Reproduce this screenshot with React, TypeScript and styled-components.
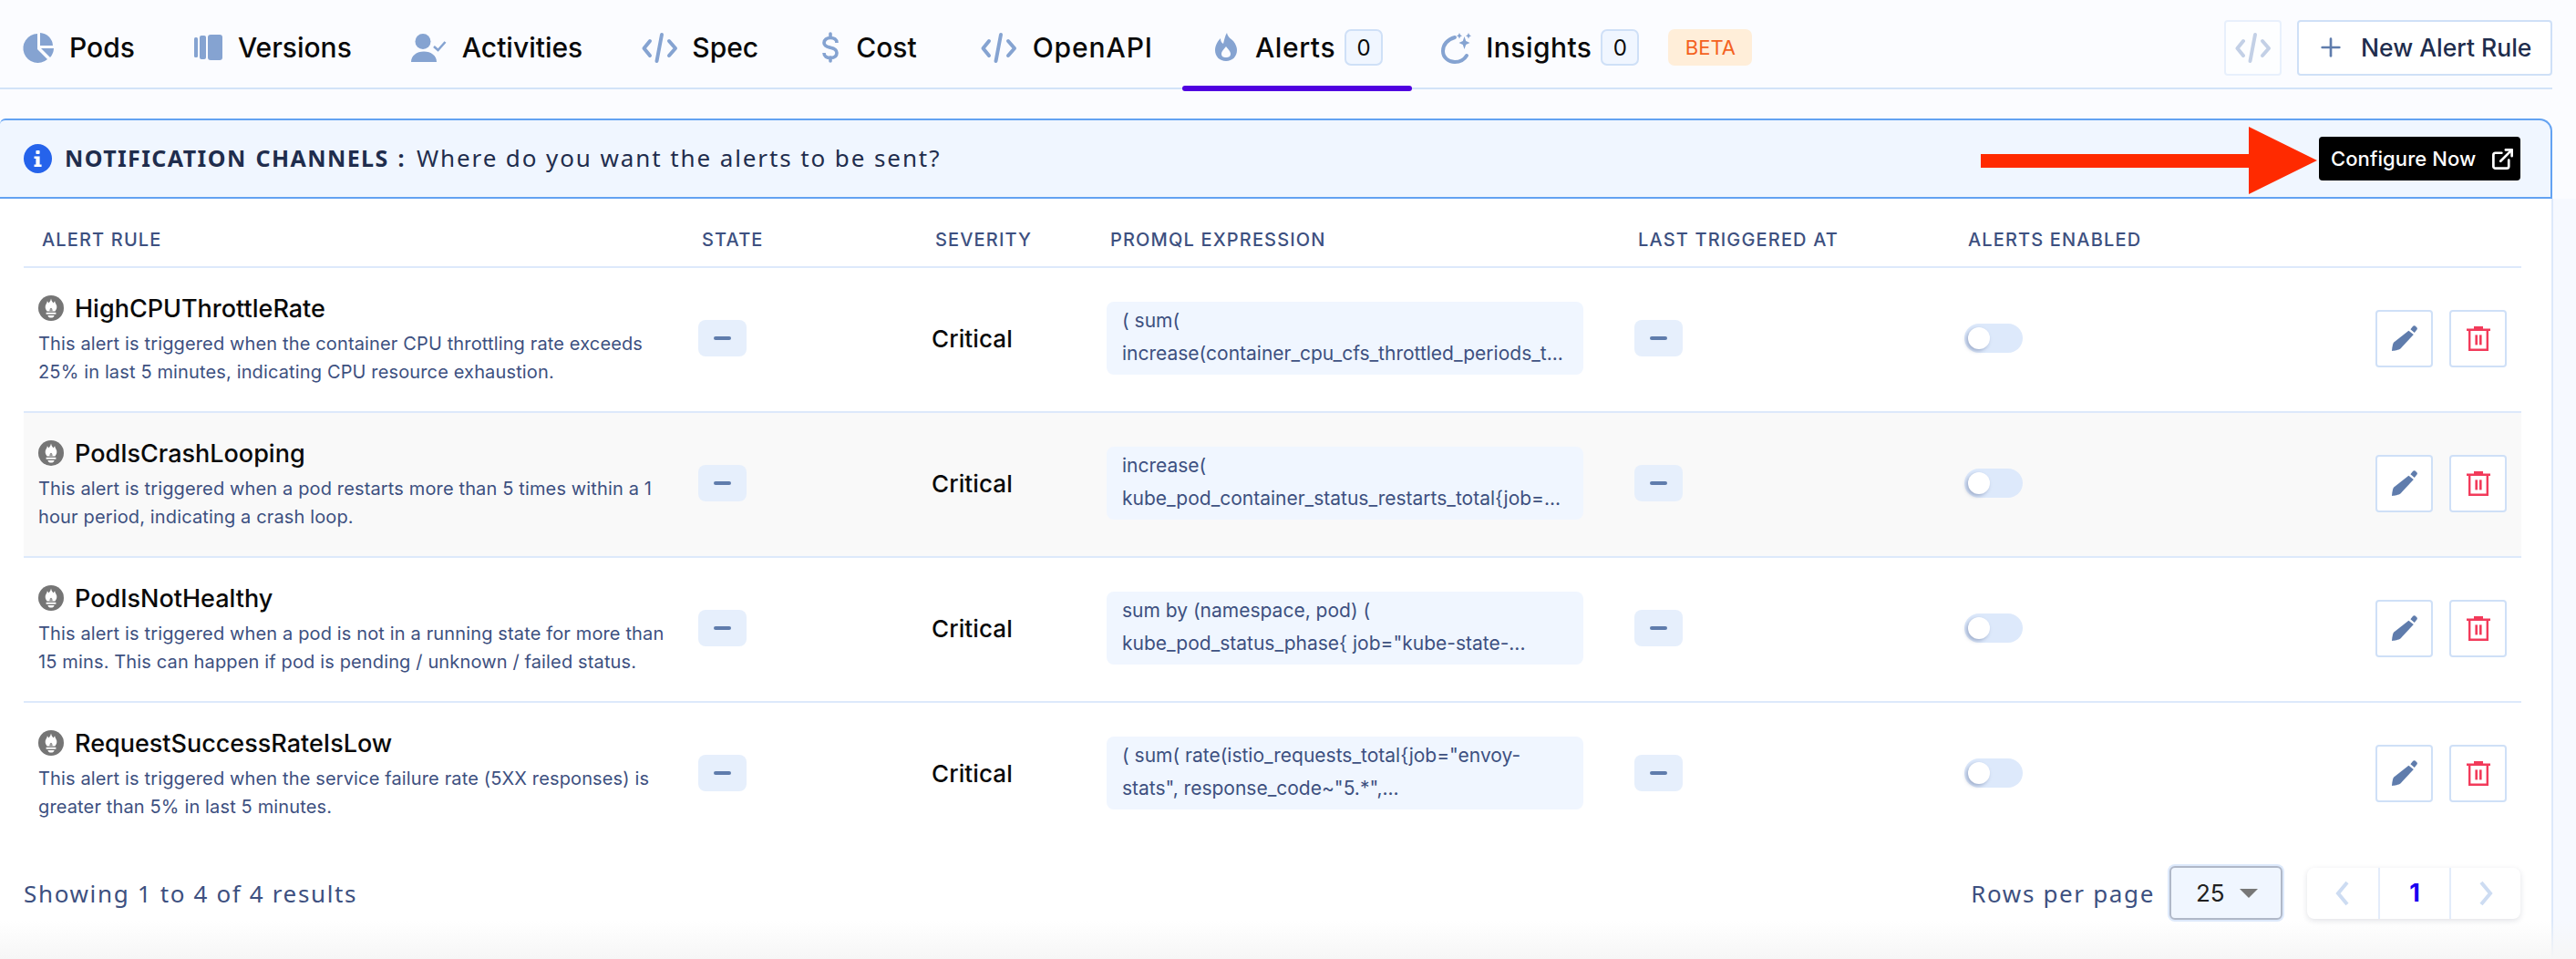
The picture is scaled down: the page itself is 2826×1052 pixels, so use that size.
import React from "react";
import styled, { createGlobalStyle } from "styled-components";
import { ExternalLink, Plus } from "lucide-react";

const GlobalStyle = createGlobalStyle`
  html, body {
    margin: 0;
    padding: 0;
    width: 2826px;
    height: 1052px;
    overflow: hidden;
    background: #fbfcff;
    font-family: Inter, "Liberation Sans", sans-serif;
  }
`;

const Page = styled.div`
  width: 2826px;
  height: 1052px;
  display: flex;
  flex-direction: column;
  position: relative;
  overflow: hidden;
`;

const TabBar = styled.div`
  box-sizing: border-box;
  width: 2800px;
  height: 98px;
  padding-top: 8px;
  border-bottom: 2px solid #d2e3f8;
  display: flex;
  align-items: stretch;
  justify-content: space-between;
  margin-bottom: 32px;
`;

const TabList = styled.nav`
  display: flex;
  align-items: stretch;
  margin-left: -6px;
`;

const Tab = styled.div<{ $active?: boolean; $track?: number }>`
  position: relative;
  display: flex;
  align-items: center;
  padding: 0 32px;
  font-size: 30px;
  font-weight: 500;
  letter-spacing: ${(p) => p.$track ?? 0}px;
  color: #0a0a0a;
  &::after {
    content: "";
    display: ${(p) => (p.$active ? "block" : "none")};
    position: absolute;
    left: 0;
    right: 0;
    bottom: -4px;
    height: 6px;
    border-radius: 3px;
    background: #4f00e0;
  }
`;

const IconSlot = styled.span<{ $w: number }>`
  width: ${(p) => p.$w}px;
  height: 36px;
  display: inline-flex;
  flex: none;
  svg {
    overflow: visible;
  }
`;

const CountBadge = styled.span`
  box-sizing: border-box;
  width: 42px;
  height: 40px;
  margin-left: 10px;
  display: inline-flex;
  align-items: center;
  justify-content: center;
  font-size: 24px;
  font-weight: 400;
  letter-spacing: 0;
  background: #f0f6ff;
  border: 2px solid #cfe0f7;
  border-radius: 7px;
`;

const BetaBadge = styled.span`
  width: 92px;
  height: 40px;
  align-self: center;
  display: inline-flex;
  align-items: center;
  justify-content: center;
  font-size: 22px;
  background: #ffeed9;
  color: #f4621f;
  border-radius: 7px;
`;

const TabActions = styled.div`
  display: flex;
  align-items: center;
  gap: 17px;
`;

const CodeButton = styled.button`
  box-sizing: border-box;
  width: 63px;
  height: 61px;
  padding: 0;
  display: flex;
  align-items: center;
  justify-content: center;
  background: #fdfeff;
  border: 2px solid #e8f0fc;
  border-radius: 4px;
`;

const NewRuleButton = styled.button`
  box-sizing: border-box;
  width: 280px;
  height: 61px;
  padding: 0 0 0 19px;
  display: flex;
  align-items: center;
  gap: 17px;
  background: #ffffff;
  border: 2px solid #cfe0f7;
  border-radius: 4px;
  font-family: inherit;
  font-size: 26.5px;
  font-weight: 500;
  color: #1f2d4d;
  white-space: nowrap;
`;

const Banner = styled.div`
  position: relative;
  box-sizing: border-box;
  width: 2800px;
  height: 88px;
  padding: 0 33px 0 26px;
  display: flex;
  align-items: center;
  background: #f0f6ff;
  border: 2px solid #63a2f2;
  border-left: none;
  border-radius: 6px 14px 0 0;
  font-family: "Noto Sans", sans-serif;
  font-size: 26px;
  color: #1f2d4d;
`;

const BannerLabel = styled.b`
  margin: -2px 0 0 14px;
  font-size: 25px;
  font-weight: 700;
  letter-spacing: 1.4px;
  word-spacing: 2px;
  white-space: pre;
`;

const BannerText = styled.span`
  margin: -2px 0 0 12px;
  letter-spacing: 1.9px;
  white-space: pre;
`;

const ConfigureButton = styled.button`
  box-sizing: border-box;
  margin-left: auto;
  width: 221px;
  height: 48px;
  padding: 0 6px 0 13px;
  display: flex;
  align-items: center;
  justify-content: space-between;
  background: #000000;
  border: none;
  border-radius: 4px;
  color: #ffffff;
  font-family: Inter, sans-serif;
  font-size: 22px;
  font-weight: 500;
  letter-spacing: 0.1px;
  white-space: nowrap;
`;

const ArrowMark = styled.svg`
  position: absolute;
  right: 254px;
  top: 7px;
`;

const Lower = styled.div`
  flex: 1;
  background: #f6f9ff;
  position: relative;
`;

const Content = styled.main`
  box-sizing: border-box;
  width: 2801px;
  height: 834px;
  padding: 0 33px 0 26px;
  background: #ffffff;
  border-right: 2px solid #dde9fb;
`;

const BottomFade = styled.div`
  position: absolute;
  left: 0;
  right: 0;
  bottom: 0;
  height: 42px;
  background: linear-gradient(rgba(246, 246, 246, 0), rgba(246, 246, 246, 1));
  pointer-events: none;
`;

const columns = "740px 256px 192px 579px 362px 240px 1fr";

const HeadRow = styled.div`
  box-sizing: border-box;
  height: 76px;
  padding-top: 16px;
  display: grid;
  grid-template-columns: ${columns};
  align-items: center;
  border-bottom: 2px solid #dde9fb;
`;

const HeadCell = styled.div`
  padding-left: 4px;
  font-size: 20px;
  font-weight: 500;
  letter-spacing: 1.15px;
  color: #3d5080;
  white-space: nowrap;
  &:first-child {
    padding-left: 20px;
  }
`;

const Row = styled.div<{ $shaded?: boolean; $last?: boolean }>`
  box-sizing: border-box;
  height: 159px;
  padding-bottom: 3px;
  display: grid;
  grid-template-columns: ${columns};
  align-items: center;
  background: ${(p) => (p.$shaded ? "#f9f9f9" : "#ffffff")};
  border-bottom: 2px solid ${(p) => (p.$last ? "transparent" : "#dde9fb")};
`;

const RuleCell = styled.div`
  padding: 4px 0 0 16px;
`;

const RuleTitle = styled.div`
  display: flex;
  align-items: center;
  gap: 12px;
  height: 32px;
  margin-bottom: 8px;
  font-size: 27px;
  font-weight: 500;
  color: #0a0a0a;
`;

const RuleDesc = styled.div`
  width: 700px;
  font-size: 20px;
  line-height: 31px;
  letter-spacing: 0.14px;
  color: #3d5080;
`;

const DashChip = styled.div`
  width: 53px;
  height: 40px;
  display: flex;
  align-items: center;
  justify-content: center;
  background: #e6effc;
  border-radius: 8px;
  &::before {
    content: "";
    width: 19px;
    height: 4px;
    border-radius: 2px;
    background: #5f7cac;
  }
`;

const Severity = styled.div`
  font-size: 26px;
  font-weight: 500;
  letter-spacing: 0.1px;
  color: #0a0a0a;
`;

const ExprBox = styled.div`
  box-sizing: border-box;
  width: 523px;
  height: 80px;
  padding: 3px 17px;
  background: #f0f6ff;
  border-radius: 8px;
  font-size: 21px;
  line-height: 36px;
  color: #3d5080;
  white-space: nowrap;
  overflow: hidden;
`;

const Toggle = styled.div`
  width: 64px;
  height: 32px;
  box-sizing: border-box;
  padding: 4px;
  background: #dde9fb;
  border-radius: 16px;
`;

const Knob = styled.div`
  width: 24px;
  height: 24px;
  border-radius: 50%;
  background: #ffffff;
  box-shadow: -2px 2px 4px rgba(60, 80, 130, 0.4);
`;

const ActionCell = styled.div`
  display: flex;
  justify-content: flex-end;
  gap: 18px;
  padding-right: 16px;
`;

const SquareButton = styled.button`
  box-sizing: border-box;
  width: 63px;
  height: 63px;
  padding: 0;
  display: flex;
  align-items: center;
  justify-content: center;
  background: #ffffff;
  border: 2px solid #cfe0f7;
  border-radius: 4px;
`;

const Footer = styled.footer`
  height: 63px;
  padding-top: 18px;
  display: flex;
  align-items: center;
  justify-content: space-between;
  font-family: "Noto Sans", sans-serif;
  font-size: 26px;
  letter-spacing: 1.65px;
  color: #3d5080;
`;

const FooterRight = styled.div`
  display: flex;
  align-items: center;
`;

const SelectBox = styled.div`
  box-sizing: border-box;
  width: 124px;
  height: 59px;
  margin: 0 27px 0 16px;
  padding: 0 25px 0 27px;
  display: flex;
  align-items: center;
  justify-content: space-between;
  background: #f0f6ff;
  border: 2px solid #b0b8c8;
  border-radius: 6px;
  box-shadow: 0 0 0 2px #dde9fb;
  font-family: Inter, sans-serif;
  font-size: 26px;
  letter-spacing: 0;
  color: #202020;
  &::after {
    content: "";
    border-left: 10px solid transparent;
    border-right: 10px solid transparent;
    border-top: 10px solid #777777;
  }
`;

const Pager = styled.div`
  display: flex;
  height: 56px;
  margin-right: 1px;
  background: #ffffff;
  border-radius: 8px;
  box-shadow: 0 2px 6px rgba(40, 50, 80, 0.14);
`;

const PagerCell = styled.div<{ $current?: boolean }>`
  box-sizing: border-box;
  width: 78px;
  display: flex;
  align-items: center;
  justify-content: center;
  font-family: Inter, sans-serif;
  font-size: 27px;
  font-weight: 700;
  letter-spacing: 0;
  color: ${(p) => (p.$current ? "#1a00f0" : "#cddcf2")};
  & + & {
    border-left: 2px solid #e3ecfa;
  }
`;

const ICON_BLUE = "#85a3d1";

const TabIcon = ({ w, ox = 0, children }: { w: number; ox?: number; children: React.ReactNode }) => (
  <IconSlot $w={w}>
    <svg width={w} height={36} viewBox={`${-ox} -2 ${w} 36`} fill={ICON_BLUE}>
      {children}
    </svg>
  </IconSlot>
);

const CodeGlyph = ({ color = ICON_BLUE }: { color?: string }) => (
  <g fill="none" stroke={color} strokeWidth={4} strokeLinecap="round" strokeLinejoin="round">
    <path d="M9 9 L2.5 17 L9 25" />
    <path d="M22 2 L16.5 31" />
    <path d="M30 9 L37 17 L30 25" />
  </g>
);

const Prometheus = () => (
  <svg width={28} height={28} viewBox="0 0 28 28" style={{ flex: "none" }}>
    <circle cx={14} cy={14} r={14} fill="#757575" />
    <path
      d="M14 3.5 C14.6 6.5 15.8 7.6 16.8 8.6 C17 7.6 17.5 6.8 18.2 6.2 C18 8 19.8 9.6 20.2 11.6 C20.6 13.8 19.8 16 18.4 17.4 H9.6 C8.2 16 7.4 13.8 7.8 11.6 C8.2 9.6 10 8 9.8 6.2 C10.5 6.8 11 7.6 11.2 8.6 C12.2 7.6 13.4 6.5 14 3.5 Z"
      fill="#ffffff"
    />
    <path d="M12.4 17.4 C12 16 13 15 13.2 13.8 C13.7 14.1 14.3 14.1 14.8 13.8 C15 15 16 16 15.6 17.4 Z" fill="#9a9a9a" />
    <rect x={8.6} y={18.8} width={10.8} height={1.9} fill="#ffffff" />
    <path d="M10.4 22 H17.6 C17.4 23.6 15.8 24.6 14 24.6 C12.2 24.6 10.6 23.6 10.4 22 Z" fill="#ffffff" />
  </svg>
);

const Pencil = () => (
  <svg width={28} height={28} viewBox="0 0 28 28" fill="#5f7cac">
    <path d="M20.4 4.2 L23.2 0.8 C23.8 0.1 24.8 0 25.5 0.5 L27.2 2 C28 2.7 28.1 3.8 27.5 4.5 L24.8 8 Z" />
    <path d="M18.4 5.8 L23.8 10 L9.4 25.6 C7.8 27.1 2.6 27.8 0 28 C0.2 25.4 0.8 20.4 2.2 18.6 Z" />
  </svg>
);

const Trash = () => (
  <svg width={26} height={27} viewBox="0 0 26 27" fill="#f23a5a">
    <path d="M8 0 H18 V2.4 H26 V5 H0 V2.4 H8 Z" />
    <path d="M2 5 H24 V27 H2 Z M4.4 5 V24.6 H21.6 V5 Z" fillRule="evenodd" />
    <rect x={9.4} y={9.4} width={2.6} height={11} />
    <rect x={14} y={9.4} width={2.6} height={11} />
  </svg>
);

type Alert = {
  name: string;
  desc: string;
  expr: [string, string];
};

const alerts: Alert[] = [
  {
    name: "HighCPUThrottleRate",
    desc: "This alert is triggered when the container CPU throttling rate exceeds 25% in last 5 minutes, indicating CPU resource exhaustion.",
    expr: ["( sum(", "increase(container_cpu_cfs_throttled_periods_t..."],
  },
  {
    name: "PodIsCrashLooping",
    desc: "This alert is triggered when a pod restarts more than 5 times within a 1 hour period, indicating a crash loop.",
    expr: ["increase(", "kube_pod_container_status_restarts_total{job=..."],
  },
  {
    name: "PodIsNotHealthy",
    desc: "This alert is triggered when a pod is not in a running state for more than 15 mins. This can happen if pod is pending / unknown / failed status.",
    expr: ["sum by (namespace, pod) (", 'kube_pod_status_phase{ job="kube-state-...'],
  },
  {
    name: "RequestSuccessRateIsLow",
    desc: "This alert is triggered when the service failure rate (5XX responses) is greater than 5% in last 5 minutes.",
    expr: ['( sum( rate(istio_requests_total{job="envoy-', 'stats", response_code~"5.*",...'],
  },
];

export default function App() {
  return (
    <Page>
      <GlobalStyle />
      <TabBar>
        <TabList>
          <Tab>
            <TabIcon w={50}>
              <path d="M15 1 A16 16 0 1 0 26 29 L15 18 Z" />
              <path d="M18 0 A15 15 0 0 1 32 14 L18 14 Z" />
              <path d="M19 17 L33 17 A16 16 0 0 1 29 27 Z" />
            </TabIcon>
            Pods
          </Tab>
          <Tab>
            <TabIcon w={49} ox={1}>
              <rect x={0} y={5} width={4} height={22} rx={1.5} />
              <rect x={6} y={3} width={7} height={26} rx={2} />
              <rect x={15} y={2} width={16} height={28} rx={3} />
            </TabIcon>
            Versions
          </Tab>
          <Tab>
            <TabIcon w={57} ox={1}>
              <circle cx={13} cy={9.5} r={8.5} />
              <path d="M0 32 C0 25 6 20.5 14 20.5 C22 20.5 28 25 28 32 Z" />
              <path d="M25 15 L29.5 19 L37.5 10" fill="none" stroke={ICON_BLUE} strokeWidth={2.6} />
            </TabIcon>
            Activities
          </Tab>
          <Tab>
            <TabIcon w={56} ox={1}>
              <CodeGlyph />
            </TabIcon>
            Spec
          </Tab>
          <Tab>
            <TabIcon w={43} ox={6}>
              <path
                d="M16 11 C16 7 13 5.5 9 5.5 C5 5.5 2 7.5 2 11 C2 15 6 15.6 9 16.2 C13 17 16 18 16 22 C16 26 13 27.5 9 27.5 C5 27.5 2 26 2 22"
                fill="none"
                stroke={ICON_BLUE}
                strokeWidth={3.6}
              />
              <path d="M9 1 V5 M9 27 V31" fill="none" stroke={ICON_BLUE} strokeWidth={3.6} strokeLinecap="round" />
            </TabIcon>
            Cost
          </Tab>
          <Tab $track={0.9}>
            <TabIcon w={63} ox={6}>
              <CodeGlyph />
            </TabIcon>
            OpenAPI
          </Tab>
          <Tab $active $track={0.6}>
            <TabIcon w={48} ox={4}>
              <path
                fillRule="evenodd"
                d="M13 0 C14 5 17 6 20 9 C23 13 24 16 24 19 C24 26 19 31 12 31 C5 31 0 26 0 19 C0 14 3 9 6 6 C6 9 7 11 9 12 C10 8 11 3 13 0 Z M12 15 C10 18 7 20 7 23 C7 26 9 27 12 27 C15 27 17 26 17 23 C17 20 14 18 12 15 Z"
              />
            </TabIcon>
            Alerts
            <CountBadge>0</CountBadge>
          </Tab>
          <Tab $track={0.45}>
            <TabIcon w={49}>
              <path d="M15 5 C7 7 2 13 2 20 C2 27 8 32 15 32 C20 32 25 30 28 25" fill="none" stroke={ICON_BLUE} strokeWidth={4} strokeLinecap="round" />
              <path d="M25.5 4 L27.2 9 L31.5 11 L27.2 13 L25.5 18 L23.8 13 L19.5 11 L23.8 9 Z" />
              <path d="M20 0 L21 2.2 L23 3.2 L21 4.2 L20 6.4 L19 4.2 L17 3.2 L19 2.2 Z" />
              <path d="M30 0 L31 2.2 L33 3.2 L31 4.2 L30 6.4 L29 4.2 L27 3.2 L29 2.2 Z" />
            </TabIcon>
            Insights
            <CountBadge>0</CountBadge>
          </Tab>
          <BetaBadge>BETA</BetaBadge>
        </TabList>
        <TabActions>
          <CodeButton>
            <svg width={40} height={36} viewBox="0 -2 40 36">
              <CodeGlyph color="#c3d0e6" />
            </svg>
          </CodeButton>
          <NewRuleButton>
            <Plus size={32} color="#5f7cac" strokeWidth={2} />
            New Alert Rule
          </NewRuleButton>
        </TabActions>
      </TabBar>

      <Banner>
        <svg width={31} height={32} viewBox="0 0 31 32">
          <ellipse cx={15.5} cy={16} rx={15.5} ry={16} fill="#2563eb" />
          <rect x={13.4} y={7} width={4.2} height={4} rx={1} fill="#ffffff" />
          <path d="M11.5 13.5 H17.6 V22.4 H19.6 V25 H11.5 V22.4 H13.4 V16 H11.5 Z" fill="#ffffff" />
        </svg>
        <BannerLabel>NOTIFICATION CHANNELS :</BannerLabel>
        <BannerText>Where do you want the alerts to be sent?</BannerText>
        <ArrowMark width={371} height={74} viewBox="0 0 371 74">
          <path d="M0 30 H294 V0 L369 37 L294 74 V45 H0 Z" fill="#ff2a00" />
        </ArrowMark>
        <ConfigureButton>
          Configure Now
          <ExternalLink size={27} strokeWidth={2.4} />
        </ConfigureButton>
      </Banner>

      <Lower>
        <Content>
          <HeadRow>
            <HeadCell>ALERT RULE</HeadCell>
            <HeadCell>STATE</HeadCell>
            <HeadCell>SEVERITY</HeadCell>
            <HeadCell>PROMQL EXPRESSION</HeadCell>
            <HeadCell>LAST TRIGGERED AT</HeadCell>
            <HeadCell>ALERTS ENABLED</HeadCell>
            <HeadCell />
          </HeadRow>
          {alerts.map((alert, i) => (
            <Row key={alert.name} $shaded={i === 1} $last={i === alerts.length - 1}>
              <RuleCell>
                <RuleTitle>
                  <Prometheus />
                  {alert.name}
                </RuleTitle>
                <RuleDesc>{alert.desc}</RuleDesc>
              </RuleCell>
              <DashChip />
              <Severity>Critical</Severity>
              <ExprBox>
                {alert.expr[0]}
                <br />
                {alert.expr[1]}
              </ExprBox>
              <DashChip />
              <Toggle>
                <Knob />
              </Toggle>
              <ActionCell>
                <SquareButton>
                  <Pencil />
                </SquareButton>
                <SquareButton>
                  <Trash />
                </SquareButton>
              </ActionCell>
            </Row>
          ))}
          <Footer>
            <span>Showing 1 to 4 of 4 results</span>
            <FooterRight>
              <span>Rows per page</span>
              <SelectBox>25</SelectBox>
              <Pager>
                <PagerCell>
                  <svg width={16} height={28} viewBox="0 0 16 28" fill="none" stroke="currentColor" strokeWidth={4}>
                    <path d="M13 2 L3 14 L13 26" />
                  </svg>
                </PagerCell>
                <PagerCell $current>1</PagerCell>
                <PagerCell>
                  <svg width={16} height={28} viewBox="0 0 16 28" fill="none" stroke="currentColor" strokeWidth={4}>
                    <path d="M3 2 L13 14 L3 26" />
                  </svg>
                </PagerCell>
              </Pager>
            </FooterRight>
          </Footer>
        </Content>
        <BottomFade />
      </Lower>
    </Page>
  );
}
